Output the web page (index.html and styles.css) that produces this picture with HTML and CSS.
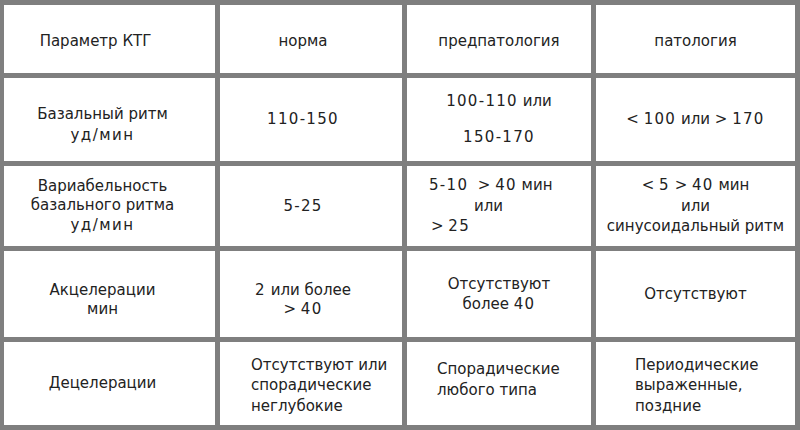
FILE: index.html
```html
<!DOCTYPE html>
<html lang="ru">
<head>
<meta charset="utf-8">
<title>Параметры КТГ</title>
<link rel="stylesheet" href="styles.css">
</head>
<body>
<div class="ktg">
  <div class="cell col1 head">Параметр КТГ</div>
  <div class="cell col2 head">норма</div>
  <div class="cell col3 head">предпатология</div>
  <div class="cell col4 head">патология</div>

  <div class="cell col1 shift5 lh21"><div>Базальный ритм</div><div class="wide">уд/мин</div></div>
  <div class="cell col2"><span class="num">110-150</span></div>
  <div class="cell col3"><div><span class="num">100-110</span> или</div><div class="spaced"><span class="num">150-170</span></div></div>
  <div class="cell col4"><div>&lt; <span class="num">100</span> или &gt; <span class="num">170</span></div></div>

  <div class="cell col1 lh19"><div>Вариабельность</div><div>базального ритма</div><div class="wide">уд/мин</div></div>
  <div class="cell col2"><span class="num">5-25</span></div>
  <div class="cell col3 left pad22"><div class="pre"><span class="num">5-10</span>  &gt; <span class="num">40</span> мин</div><div class="ind45">или</div><div class="ind2">&gt; <span class="num">25</span></div></div>
  <div class="cell col4"><div>&lt; <span class="num">5</span> &gt; <span class="num">40</span> мин</div><div>или</div><div>синусоидальный ритм</div></div>

  <div class="cell col1 shift6 lh19"><div>Акцелерации</div><div>мин</div></div>
  <div class="cell col2 shift6 lh19"><div><span class="num">2</span> или более</div><div>&gt; <span class="num">40</span></div></div>
  <div class="cell col3"><div>Отсутствуют</div><div>более <span class="num">40</span></div></div>
  <div class="cell col4">Отсутствуют</div>

  <div class="cell col1">Децелерации</div>
  <div class="cell col2 left pad31 down2"><div>Отсутствуют или</div><div>спорадические</div><div>неглубокие</div></div>
  <div class="cell col3 left pad30 up4"><div>Спорадические</div><div>любого типа</div></div>
  <div class="cell col4 left pad39 down2"><div>Периодические</div><div>выраженные,</div><div>поздние</div></div>
</div>
</body>
</html>
```

FILE: styles.css
```css
html, body {
  margin: 0;
  padding: 0;
  background: #ffffff;
}

.ktg {
  width: 800px;
  height: 430px;
  box-sizing: border-box;
  display: grid;
  grid-template-columns: 211px 182px 184px 199px;
  grid-template-rows: 68px 83px 80px 86px 83px;
  gap: 5px;
  padding: 5px 5px 5px 4px;
  background: #7f7f7f;
  font-family: "DejaVu Sans", "Noto Sans", sans-serif;
  font-size: 15px;
  line-height: 20.5px;
  color: #222222;
}

.cell {
  background: #ffffff;
  display: flex;
  flex-direction: column;
  justify-content: center;
  text-align: center;
  box-sizing: border-box;
  white-space: nowrap;
}

.col1 { padding-right: 14px; }
.col2 { padding-right: 16px; }

.head { padding-top: 5px; }
.head.col1 { padding-right: 28px; }

.shift5 { padding-top: 10px; }
.shift6 { padding-top: 12px; }
.up4 { padding-bottom: 8px; }
.down2 { padding-top: 4px; }

.lh21 { line-height: 21px; }
.lh19 { line-height: 19.5px; }

.spaced { margin-top: 15.5px; }

.num { letter-spacing: 1.3px; }
.wide { letter-spacing: 1.5px; }

.left { text-align: left; }
.col2.left { padding-right: 0; }
.pad22 { padding-left: 22px; }
.pad30 { padding-left: 30px; }
.pad31 { padding-left: 31px; }
.pad39 { padding-left: 39px; }

.pre { white-space: pre; }
.ind45 { padding-left: 45px; }
.ind2 { padding-left: 2px; }
```
